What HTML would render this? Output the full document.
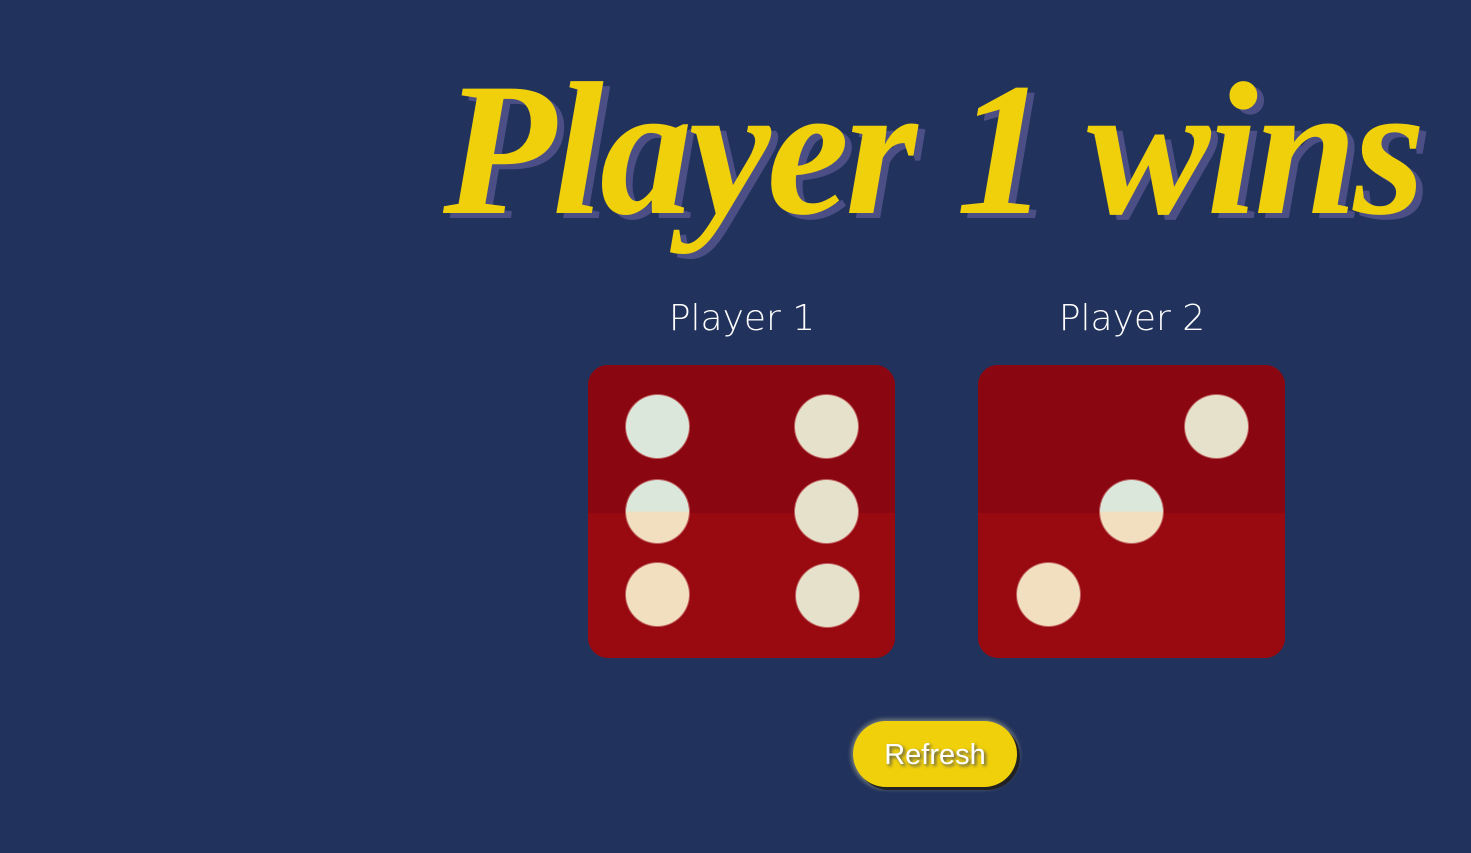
<!DOCTYPE html>
<html><head><style>
html,body{margin:0;padding:0;width:1471px;height:853px;overflow:hidden;background:#21325c;font-family:"Liberation Sans",sans-serif}
.title{position:absolute;left:443px;top:50px;width:1000px;white-space:nowrap;font-family:"Liberation Serif",serif;font-weight:bold;font-style:italic;font-size:190px;line-height:200px;color:#f0d00a;letter-spacing:-4px;text-shadow:7px 5px 0 #4b4f85;transform-origin:left top;transform:scaleX(0.975)}
.lbl{position:absolute;top:298px;width:300px;text-align:center;color:#fff;font-size:36px;font-family:"DejaVu Sans","Liberation Sans",sans-serif;font-weight:200;letter-spacing:0px}
.die{position:absolute;top:365px;width:307px;height:293px;border-radius:20px;overflow:hidden;background:#990a10}
.die .top{position:absolute;left:0;top:0;width:100%;height:148px;background:#8a0610}
.dot{position:absolute;width:63px;height:63px;border-radius:50%;background:#e6e1cb;box-shadow:0 0 0 1px #c06060}
.btn{position:absolute;left:853px;top:721px;width:164px;height:66px;border-radius:34px;background:#f0d00a;box-shadow:3px 3px 0 #222,0 0 4px 2px rgba(200,200,160,.5);color:#fff;font-size:29px;line-height:68px;text-align:center;text-shadow:2px 2px 3px #555}
</style></head><body>
<div class="title">Player 1 wins</div>
<div class="lbl" style="left:592px">Player 1</div>
<div class="lbl" style="left:982px">Player 2</div>
<div class="die" style="left:588px"><div class="top"></div>
<div class="dot" style="left:38px;top:30px;background:#dbe7da"></div>
<div class="dot" style="left:207px;top:30px"></div>
<div class="dot" style="left:38px;top:115px;background:linear-gradient(#dbe7da 50%,#f1dfc0 50%)"></div>
<div class="dot" style="left:207px;top:115px"></div>
<div class="dot" style="left:38px;top:198px;background:#f1dfc0"></div>
<div class="dot" style="left:208px;top:199px"></div>
</div>
<div class="die" style="left:978px"><div class="top"></div>
<div class="dot" style="left:207px;top:30px"></div>
<div class="dot" style="left:122px;top:115px;background:linear-gradient(#dbe7da 50%,#f1dfc0 50%)"></div>
<div class="dot" style="left:39px;top:198px;background:#f1dfc0"></div>
</div>
<div class="btn">Refresh</div>
</body></html>
